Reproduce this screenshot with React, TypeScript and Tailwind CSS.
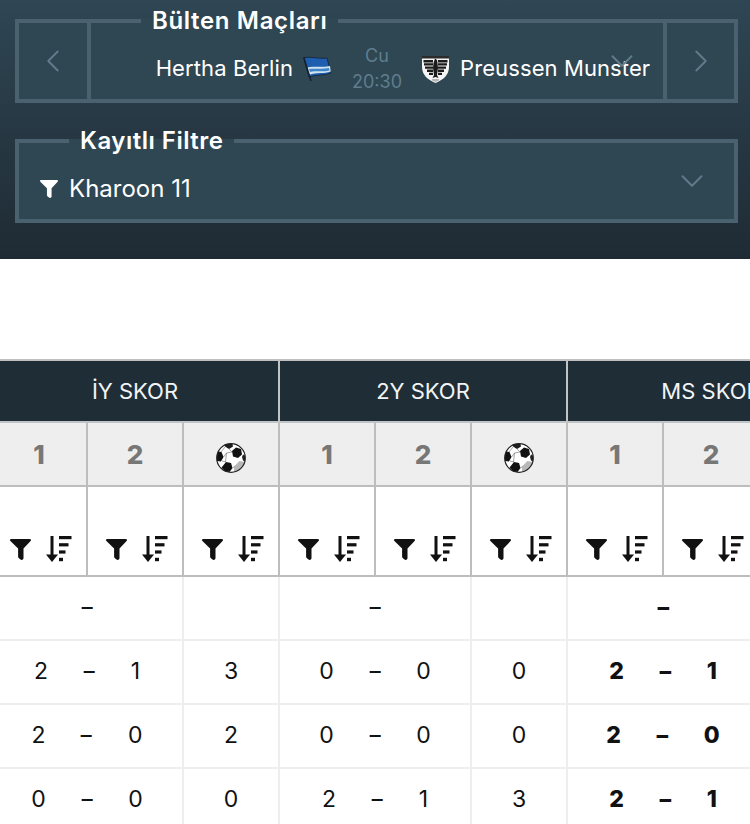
import { ChevronDown, ChevronLeft, ChevronRight } from "lucide-react"

type Score = [string, string] | null

const groups = ["İY SKOR", "2Y SKOR", "MS SKOR"]

const rows: { iy: Score; iyGoals: string; sy: Score; syGoals: string; ms: Score }[] = [
  { iy: null, iyGoals: "", sy: null, syGoals: "", ms: null },
  { iy: ["2", "1"], iyGoals: "3", sy: ["0", "0"], syGoals: "0", ms: ["2", "1"] },
  { iy: ["2", "0"], iyGoals: "2", sy: ["0", "0"], syGoals: "0", ms: ["2", "0"] },
  { iy: ["0", "0"], iyGoals: "0", sy: ["2", "1"], syGoals: "3", ms: ["2", "1"] },
]

function Funnel({ className }: { className?: string }) {
  return (
    <svg viewBox="0 0 21 21" className={className} fill="currentColor">
      <path d="M1.200 0h18.600c1 0 1.500 1.200.8 2L13.500 9.600V19c0 1.600-1.800 2.500-3 1.500l-1.600-1.300c-.5-.4-.8-1-.8-1.600V9.600L.4 2C-.3 1.200.2 0 1.200 0z" />
    </svg>
  )
}

function SortIcon() {
  return (
    <svg viewBox="0 0 26 26" className="h-[26px] w-[26px] text-[#111]" fill="currentColor">
      <rect x="4.500" y="0" width="3" height="23" />
      <path d="M0 18.500h12L6 26z" />
      <rect x="13" y="0" width="12.500" height="3.200" />
      <rect x="13" y="7.200" width="9.500" height="3.200" />
      <rect x="13" y="14.400" width="6.500" height="3.200" />
      <rect x="13" y="21.800" width="4" height="3.400" />
    </svg>
  )
}

function Ball() {
  return (
    <svg viewBox="0 0 30 30" className="h-[30px] w-[30px]">
      <circle cx="15" cy="15" r="14.300" fill="#fff" />
      <path d="M18 29c5-1 9-4.500 10.500-10l-5-1-5.500 5.500z" fill="#b8b8b8" />
      <path d="M8.500 1.500C11 .6 14 .5 16.500 1l.5 2.500-4 2.500-4-2.500z" fill="#1c1c1c" />
      <path d="M20 4.500l5 1.500 1 5.500-4 3.500-5-1.500-1-5.500z" fill="#111" />
      <path d="M2 8.500l3.500.5 2 5-2.500 4.500-4-.5C.3 14.500.8 11.500 2 8.500z" fill="#111" />
      <path d="M10 19l5 1 1.500 5-3 4-4.500-.5-3.500-4z" fill="#111" />
      <path d="M27 11.500l2 1c.3 2 .3 4-.2 6l-1.800-1-1-3.500z" fill="#222" />
      <path d="M5 9l4-5M13 6l3 3M7.500 14l3-4 5.500-1M10.500 10l-1 9M6 18l4 1M16.500 25l2-1.500" stroke="#666" strokeWidth=".6" fill="none" />
      <circle cx="15" cy="15" r="14.300" fill="none" stroke="#222" strokeWidth="1.200" />
    </svg>
  )
}

function HerthaFlag() {
  return (
    <svg viewBox="0 0 29 26" className="h-[26px] w-[29px]">
      <path d="M.8 1.500C8 .5 16 3 24 2l4 15c-7 3-14 1-22 4z" fill="#1d5eae" stroke="#14263d" strokeWidth=".9" />
      <path d="M4 11.500c8-1.500 15 0 23-1.500l.8 5.500c-7 2.500-14 .5-21.800 3.500z" fill="#cfe0ef" />
      <path d="M6 13c6-1 13 .5 20-1l.5 2.500c-7 1.500-13 0-19.500 1.500z" fill="#3d86c9" />
      <path d="M.8 1.500L8 25" stroke="#14202c" strokeWidth="1.600" fill="none" />
    </svg>
  )
}

function PreussenCrest() {
  return (
    <svg viewBox="0 0 27 28" className="h-[28px] w-[27px]">
      <path d="M0 1h27v11c0 8-6 13-13.500 16C6 25 0 20 0 12z" fill="#f5f5f5" />
      <path d="M0 1h27v2.500H0z" fill="#2b2b2b" />
      <g fill="#1b1b1b">
        <path d="M1.500 5h9.500v2.400H1.500zM2 8.200h9v2.400H2zM3 11.400h8v2.400H3zM5 14.600h6v2.400H5zM7 17.800h4V20H7z" />
        <path d="M16 5h9.500v2.400H16zM16 8.200h9v2.400h-9zM16 11.400h8v2.400h-8zM16 14.600h6v2.400h-6zM16 17.800h4V20h-4z" />
        <path d="M13 3.500l2 1.500.5 3 .5 5-1 7 1.500 3-3-1-3 1 1.500-3-1-7 .5-5z" />
      </g>
      <path d="M10 24h7v1.500L13.500 27 10 25.500z" fill="#b5b5b5" />
    </svg>
  )
}

function ScoreCell({ score, bold }: { score: Score; bold?: boolean }) {
  return (
    <div
      className={`col-span-2 flex items-center justify-center gap-[36px] border-r-2 border-b-2 border-[#eeeeee] pb-[2px] text-[23px] text-[#111] ${bold ? "font-extrabold" : ""}`}
    >
      {score ? (
        <>
          <span>{score[0]}</span>
          <span className="inline-block scale-x-[1.5]">-</span>
          <span>{score[1]}</span>
        </>
      ) : (
        <span className="inline-block scale-x-[1.5]">-</span>
      )}
    </div>
  )
}

export default function App() {
  return (
    <div className="h-[824px] w-[750px] overflow-hidden bg-white font-['Inter',sans-serif]">
      <header className="h-[259px] bg-gradient-to-b from-[#2f4654] to-[#1f2b34] pt-[19px] pr-[12px] pl-[15px] text-white">
        <fieldset className="h-[84px] border-4 border-[#4a6170] bg-[#2f4653]">
          <legend className="ml-[122px] px-[11px] text-[24px] leading-[4px] font-semibold tracking-[0.65px]">Bülten Maçları</legend>
          <div className="relative flex h-[76px]">
            <div className="box-content flex w-[68px] items-center justify-center border-r-4 border-[#4a6170]">
              <ChevronLeft className="h-[38px] w-[38px] text-[#607c8b]" strokeWidth={1.2} />
            </div>
            <div className="relative grid flex-1 grid-cols-[1fr_auto_1fr] items-center gap-[20px] pt-[15px]">
              <div className="flex items-center justify-end gap-[10px]">
                <span className="text-[22px] tracking-[0.1px] whitespace-nowrap">Hertha Berlin</span>
                <HerthaFlag />
              </div>
              <div className="text-center text-[18px] leading-[26px] text-[#5f7d8e]">
                Cu
                <br />
                20:30
              </div>
              <div className="flex items-center gap-[11px]">
                <PreussenCrest />
                <span className="text-[22px] tracking-[0.1px] whitespace-nowrap">Preussen Munster</span>
              </div>
              <ChevronDown className="absolute top-[19px] right-[22px] h-[38px] w-[38px] text-[#607c8b]" strokeWidth={1.2} />
            </div>
            <div className="box-content flex w-[67px] items-center justify-center border-l-4 border-[#4a6170]">
              <ChevronRight className="h-[38px] w-[38px] text-[#607c8b]" strokeWidth={1.2} />
            </div>
          </div>
        </fieldset>
        <fieldset className="mt-[36px] h-[84px] border-4 border-[#4a6170] bg-[#2f4653]">
          <legend className="ml-[50px] px-[11px] text-[24px] leading-[4px] font-semibold tracking-[0.5px]">Kayıtlı Filtre</legend>
          <div className="flex h-[76px] items-center justify-between pr-[23px] pl-[21px]">
            <div className="mt-[15px] flex items-center gap-[11px]">
              <Funnel className="h-[18px] w-[18px]" />
              <span className="text-[24px]">Kharoon 11</span>
            </div>
            <ChevronDown className="h-[38px] w-[38px] text-[#607c8b]" strokeWidth={1.2} />
          </div>
        </fieldset>
      </header>

      <section className="mt-[100px] -ml-[8px] grid w-[864px] grid-cols-[repeat(9,96px)] border-t-2 border-[#c0c0c0]">
        {groups.map((g) => (
          <div
            key={g}
            className="col-span-3 flex h-[62px] items-center justify-center border-r-2 border-b-2 border-[#c0c4c7] bg-[#1f2d37] text-[22px] text-[#f2f4f5] whitespace-nowrap"
          >
            {g}
          </div>
        ))}

        {groups.map((g) =>
          ["1", "2", "ball"].map((c) => (
            <div
              key={g + c}
              className="flex h-[64px] items-center justify-center border-r-2 border-b-2 border-[#bdbdbd] bg-[#eeeeee] text-[26px] font-extrabold text-[#777777]"
            >
              {c === "ball" ? (
                <span className="mt-[8px]">
                  <Ball />
                </span>
              ) : (
                c
              )}
            </div>
          ))
        )}

        {Array.from({ length: 9 }).map((_, i) => (
          <div key={i} className="flex h-[90px] items-end justify-center border-r-2 border-b-2 border-[#bdbdbd] pb-[13px] pl-[4px]">
            <div className="flex items-center gap-[15px]">
              <Funnel className="h-[21px] w-[21px] text-[#111]" />
              <SortIcon />
            </div>
          </div>
        ))}

        {rows.map((r, i) => (
          <div key={i} className="col-span-9 grid h-[64px] grid-cols-[repeat(9,96px)]">
            <ScoreCell score={r.iy} />
            <div className="flex items-center justify-center border-r-2 border-b-2 border-[#eeeeee] pb-[2px] text-[23px] text-[#111]">{r.iyGoals}</div>
            <ScoreCell score={r.sy} />
            <div className="flex items-center justify-center border-r-2 border-b-2 border-[#eeeeee] pb-[2px] text-[23px] text-[#111]">{r.syGoals}</div>
            <ScoreCell score={r.ms} bold />
          </div>
        ))}
      </section>
    </div>
  )
}
